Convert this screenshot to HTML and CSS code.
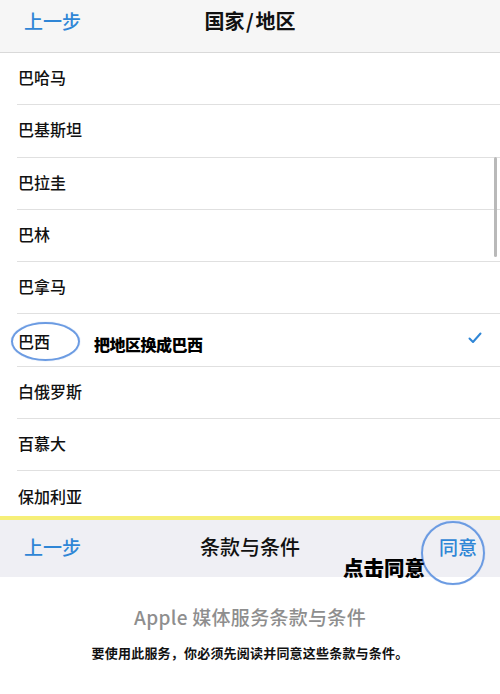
FILE: index.html
```html
<!DOCTYPE html>
<html lang="zh-CN">
<head>
<meta charset="UTF-8" />
<meta name="viewport" content="width=device-width, initial-scale=1" />
<title>国家/地区</title>
<link rel="stylesheet" href="styles.css">
</head>
<body>
<main class="screen">
  <header class="navbar">
    <span class="navbar__back">上一步</span>
    <h1 class="navbar__title">国家 / 地区</h1>
    <span class="navbar__side"></span>
  </header>

  <section class="country-list">
    <ul class="countries">
      <li class="country">巴哈马</li>
      <li class="country">巴基斯坦</li>
      <li class="country">巴拉圭</li>
      <li class="country">巴林</li>
      <li class="country">巴拿马</li>
      <li class="country country--selected">
        <span class="country__name">巴西</span>
        <span class="note note--row">把地区换成巴西</span>
        <svg class="country__check" width="14" height="12" viewBox="0 0 14 12">
          <path d="M1.5 6.5 L5 10 L12.5 1.5" fill="none" stroke="#2f86d6" stroke-width="2" stroke-linecap="round" stroke-linejoin="round"/>
        </svg>
        <span class="ring ring--country"></span>
      </li>
      <li class="country">白俄罗斯</li>
      <li class="country">百慕大</li>
      <li class="country">保加利亚</li>
    </ul>
    <div class="scrollbar"></div>
  </section>

  <div class="marker"></div>

  <div class="toolbar">
    <span class="toolbar__back">上一步</span>
    <span class="toolbar__title">条款与条件</span>
    <span class="toolbar__agree">同意</span>
    <span class="ring ring--agree"></span>
    <span class="note note--agree">点击同意</span>
  </div>

  <section class="terms">
    <h2 class="terms__title">Apple 媒体服务条款与条件</h2>
    <p class="terms__text">要使用此服务，你必须先阅读并同意这些条款与条件。</p>
  </section>
</main>
</body>
</html>
```

FILE: styles.css
```css
/* tela de termos estilo iOS */
* { box-sizing: border-box; }

body {
  margin: 0;
  background: #fff;
  font-family: "Noto Sans CJK SC", "Noto Sans", sans-serif;
  color: #111;
}

.screen {
  width: 500px;
  height: 694px;
  overflow: hidden;
  display: flex;
  flex-direction: column;
}

.navbar {
  height: 53px;
  flex: none;
  background: #f6f6f6;
  border-bottom: 1px solid #d9d9d9;
  display: flex;
  align-items: center;
  justify-content: space-between;
  padding: 0 0 12px 24px;
}
.navbar__back {
  width: 90px;
  font-size: 19px;
  color: #2f86d6;
  font-weight: 500;
}
.navbar__title {
  margin: 0;
  font-size: 20px;
  font-weight: 700;
  color: #111;
  word-spacing: -3px;
}
.navbar__side { width: 114px; }

.country-list {
  position: relative;
  height: 463px;
  flex: none;
  overflow: hidden;
}
.countries {
  list-style: none;
  margin: 0;
  padding: 0 0 0 17px;
}
.country {
  position: relative;
  height: 52.3px;
  border-bottom: 1px solid #e0e0e0;
  display: flex;
  align-items: center;
  padding: 0 0 3px 1px;
  font-size: 16px;
  font-weight: 500;
}
.country--selected { padding-top: 4px; }
.country__name { width: 76px; }
.country__check {
  margin-left: auto;
  margin-right: 18px;
  margin-top: -6px;
}

.note {
  font-weight: 900;
  color: #000;
}
.note--row {
  font-size: 16px;
  margin-top: 6px;
  letter-spacing: -0.5px;
}

.ring {
  position: absolute;
  border: 2px solid #6b9be2;
  border-radius: 50%;
  box-shadow: 0 0 1px #8fb3ea;
}
.ring--country {
  left: -6px;
  top: 8px;
  width: 69px;
  height: 39px;
}

.scrollbar {
  position: absolute;
  right: 3px;
  top: 104px;
  width: 3px;
  height: 100px;
  border-radius: 2px;
  background: #b9b9b9;
}

.marker {
  height: 4px;
  flex: none;
  background: #f6ef78;
}

.toolbar {
  position: relative;
  height: 57px;
  flex: none;
  background: #efeff4;
  display: flex;
  align-items: center;
  padding: 0 23px 4px 24px;
}
.toolbar__back {
  width: 176px;
  font-size: 19px;
  color: #2f86d6;
  font-weight: 500;
}
.toolbar__title {
  font-size: 20px;
  font-weight: 500;
  color: #111;
}
.toolbar__agree {
  margin-left: auto;
  font-size: 19px;
  color: #2f86d6;
  font-weight: 500;
}
.ring--agree {
  left: 421px;
  top: 1px;
  width: 64px;
  height: 64px;
}
.note--agree {
  position: absolute;
  left: 343px;
  top: 37px;
  font-size: 20.5px;
  line-height: 1;
}

.terms {
  text-align: center;
  padding-top: 26px;
}
.terms__title {
  margin: 0;
  font-size: 19px;
  font-weight: 500;
  color: #8e8e8e;
  letter-spacing: 0.3px;
}
.terms__text {
  margin: 13px 0 0;
  font-size: 13px;
  font-weight: 700;
  color: #111;
  letter-spacing: 0.2px;
}
```
